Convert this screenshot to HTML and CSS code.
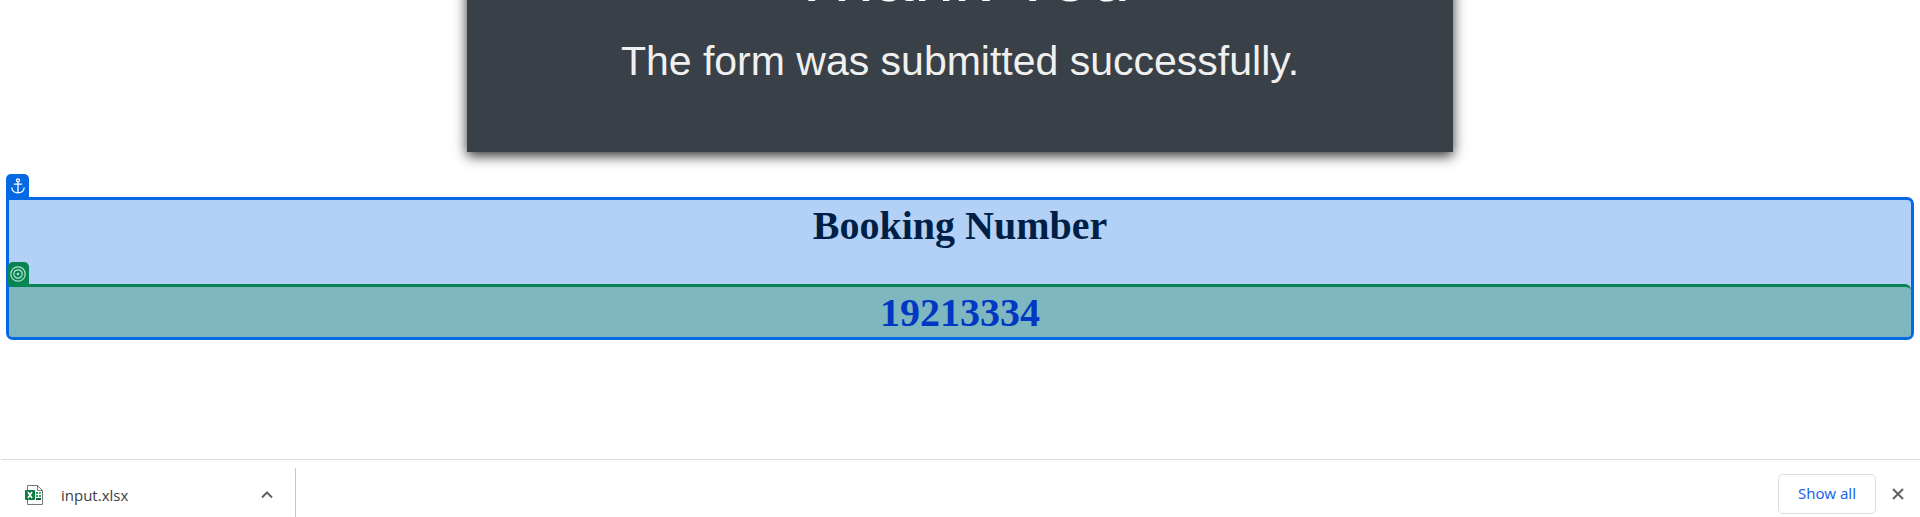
FILE: index.html
```html
<!DOCTYPE html>
<html lang="en">
<head>
<meta charset="utf-8">
<title>Thank You</title>
<link rel="stylesheet" href="styles.css">
</head>
<body>
<main class="page">
  <section class="notice">
    <h1 class="notice-title">Thank You</h1>
    <p class="notice-text">The form was submitted successfully.</p>
  </section>
  <section class="anchor-box">
    <span class="tag tag-anchor">
      <svg class="tag-icon" viewBox="0 0 16 16" fill="none" stroke="#fff" stroke-width="1.3" aria-hidden="true">
        <circle cx="8" cy="2.3" r="1.5"/><path d="M8 3.8V15M3.8 6.2h8.4M1.8 9.5c.3 3.400 2.800 5.300 6.200 5.300s5.900-1.900 6.200-5.300"/>
      </svg>
    </span>
    <h2 class="booking-title">Booking Number</h2>
    <div class="target-box">
      <span class="tag tag-target">
        <svg class="tag-icon" viewBox="0 0 16 16" fill="none" stroke="#b4e0d0" stroke-width="1.2" aria-hidden="true">
          <circle cx="8" cy="8" r="7.200"/><circle cx="8" cy="8" r="4.200"/><circle cx="8" cy="8" r="1.300" fill="#b4e0d0" stroke="none"/>
        </svg>
      </span>
      <p class="booking-number">19213334</p>
    </div>
  </section>
</main>
<footer class="downloads">
  <div class="download-item">
    <svg class="file-icon" viewBox="0 0 18 20" aria-hidden="true">
      <path d="M2.500 .5h10l5 5v14h-15z" fill="#fff" stroke="#777"/>
      <path d="M12.500 .5v5h5" fill="none" stroke="#777"/>
      <path d="M11 7h2v2h-2zM11 10h2v2h-2z" fill="#21a366"/><path d="M14 7h2v2h-2z" fill="#33c481"/><path d="M14 10h2v2h-2z" fill="#21a366"/>
      <path d="M11 13h5v2h-5z" fill="#185c37"/>
      <rect x="0" y="5" width="10" height="10" rx="1" fill="#107c41"/>
      <path d="M3 7l4 6M7 7l-4 6" stroke="#fff" stroke-width="1.500"/>
    </svg>
    <span class="file-name">input.xlsx</span>
    <button class="icon-button" type="button" aria-label="Download options">
      <svg class="chevron" viewBox="0 0 12 8" fill="none" stroke="#5f6368" stroke-width="2" aria-hidden="true"><path d="M1 6.500l5-5 5 5"/></svg>
    </button>
  </div>
  <div class="download-actions">
    <button class="show-all" type="button">Show all</button>
    <button class="icon-button" type="button" aria-label="Close">
      <svg class="close" viewBox="0 0 12 12" fill="none" stroke="#5f6368" stroke-width="2" aria-hidden="true"><path d="M1 1l10 10M11 1L1 11"/></svg>
    </button>
  </div>
</footer>
</body>
</html>
```
FILE: styles.css
```css
* { box-sizing: border-box; }
body {
  margin: 0;
  min-height: 100vh;
  display: flex;
  flex-direction: column;
  overflow: hidden;
  background: #fff;
  font-family: "Liberation Serif", serif;
}
h1, h2, p { margin: 0; }
button { font: inherit; cursor: pointer; }
.page { flex: 1; padding: 0 6px; }
.notice {
  width: 986px;
  max-width: 100%;
  margin: 0 auto;
  padding-bottom: 67px;
  background: #394047;
  box-shadow: 0 4px 12px 0 rgba(0, 0, 0, 0.8);
  color: #f0f0f0;
  font-family: "Liberation Sans", Arial, sans-serif;
  text-align: center;
}
.notice-title {
  margin-top: -64px;
  font-size: 72px;
  line-height: 80px;
  font-weight: 400;
  color: #fff;
}
.notice-text {
  padding-top: 21px;
  font-size: 41px;
  line-height: 48px;
}
.anchor-box {
  position: relative;
  margin-top: 45px;
  border: 3px solid #0469e3;
  border-radius: 0 7px 7px 7px;
  background: #b3d1f6;
  text-align: center;
}
.booking-title {
  padding: 3px 0 35px;
  font-size: 40px;
  line-height: 46px;
  color: #001f47;
}
.target-box {
  position: relative;
  border-top: 3px solid #078451;
  border-radius: 0 6px 4px 4px;
  background: #7fb7c0;
}
.booking-number {
  padding: 3px 0 1px;
  font-size: 40px;
  line-height: 46px;
  font-weight: 700;
  color: #0038c4;
}
.tag {
  position: absolute;
  display: flex;
  align-items: center;
  justify-content: center;
  height: 23px;
  border-radius: 5px 5px 0 0;
}
.tag-anchor { left: -3px; top: -26px; width: 23px; height: 24px; background: #0469e3; }
.tag-target { left: -1px; top: -25px; width: 21px; padding-right: 2px; background: #078451; }
.tag-icon { flex: none; width: 16px; height: 16px; }
.downloads {
  display: flex;
  align-items: flex-end;
  justify-content: space-between;
  height: 58px;
  margin-left: 1px;
  padding-right: 11px;
  border-top: 1px solid #dadce0;
  font-family: "Noto Sans", "Open Sans", sans-serif;
}
.download-item {
  display: flex;
  align-items: center;
  width: 295px;
  height: 49px;
  padding: 4px 17px 0 24px;
  border-right: 1px solid #c4c7ca;
}
.download-actions {
  display: flex;
  align-items: center;
  gap: 11px;
  padding-bottom: 3px;
}
.file-icon { width: 18px; height: 20px; }
.file-name {
  flex: 1;
  padding-left: 18px;
  font-family: "Open Sans", "Noto Sans", sans-serif;
  font-size: 15px;
  line-height: 20px;
  color: #3c4043;
}
.icon-button {
  display: flex;
  align-items: center;
  justify-content: center;
  width: 22px;
  height: 22px;
  padding: 0;
  border: 0;
  background: none;
}
.chevron { width: 12px; height: 8px; }
.close { width: 12px; height: 12px; }
.show-all {
  width: 98px;
  height: 40px;
  padding: 0 0 2px;
  border: 1px solid #dadce0;
  border-radius: 5px;
  background: #fff;
  color: #1a66e8;
  font-size: 15px;
}
```
